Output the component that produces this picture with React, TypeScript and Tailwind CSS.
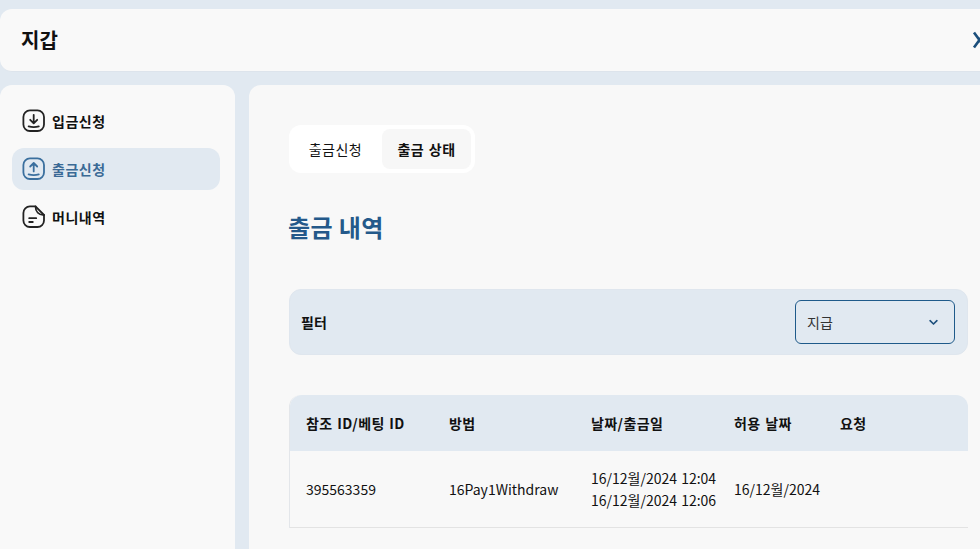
const font = "font-['Noto_Sans_CJK_KR','Noto_Sans',sans-serif]";

const DownloadIcon = () => (
  <svg width="24" height="24" viewBox="0 0 24 24" fill="none" stroke="currentColor" strokeWidth="1.8" strokeLinecap="round" strokeLinejoin="round">
    <rect x="1.4" y="1.4" width="20.6" height="20.6" rx="6.5" />
    <path d="M11.700 5.800v8.400M8.200 10.800l3.500 3.500 3.500-3.500" />
    <path d="M6.600 17.300c3.300 1 7 1 10.200 0" />
  </svg>
);

const UploadIcon = () => (
  <svg width="24" height="24" viewBox="0 0 24 24" fill="none" stroke="currentColor" strokeWidth="1.8" strokeLinecap="round" strokeLinejoin="round">
    <rect x="1.4" y="1.4" width="20.6" height="20.6" rx="6.5" />
    <path d="M11.700 14.400V6M8.200 9.500L11.700 6l3.500 3.500" />
    <path d="M6.600 17.300c3.300 1 7 1 10.200 0" />
  </svg>
);

const NoteIcon = () => (
  <svg width="24" height="24" viewBox="0 0 24 24" fill="none" stroke="currentColor" strokeWidth="1.8" strokeLinecap="round" strokeLinejoin="round">
    <path d="M13.500 1.400H7.900A6.500 6.500 0 0 0 1.400 7.900v7.600A6.500 6.500 0 0 0 7.900 22h7.600a6.500 6.500 0 0 0 6.500-6.500V10z" />
    <path d="M13.500 1.400c0 5 3.200 8.600 8.500 8.600" />
    <path d="M7.200 13.200h7M7.200 17h3.600" />
  </svg>
);

const menu = [
  { label: "입금신청", icon: <DownloadIcon /> },
  { label: "출금신청", icon: <UploadIcon />, active: true },
  { label: "머니내역", icon: <NoteIcon /> },
];

const headers = [
  { label: "참조 ID/베팅 ID", w: "w-[143px]" },
  { label: "방법", w: "w-[142px]" },
  { label: "날짜/출금일", w: "w-[143px]" },
  { label: "허용 날짜", w: "w-[106px]" },
  { label: "요청", w: "w-[100px]" },
];

export default function App() {
  return (
    <div className={`h-[549px] w-[980px] overflow-hidden bg-[#e1e9f1] pt-[9px] text-[#111] ${font}`}>
      <div className="w-[1040px]">
        <header className="flex h-[63px] items-center justify-between rounded-[12px] border-b border-[#dde4ec] bg-[#f9f9f9] pl-[21px] pr-[52px]">
          <h1 className="text-[20px] font-bold leading-none">지갑</h1>
          <svg width="16" height="18" viewBox="0 0 16 18" fill="none" stroke="#1c4f7c" strokeWidth="2.6">
            <path d="M2 1.500L13 16.500M13 1.500L2 16.500" />
          </svg>
        </header>

        <div className="mt-[13px] flex gap-[14px]">
          <aside className="h-[480px] w-[235px] shrink-0 rounded-[12px] bg-[#f9f9f9] pl-[12px] pr-[15px] pt-[15px]">
            <nav className="flex flex-col gap-[6px]">
              {menu.map((item) => (
                <div
                  key={item.label}
                  className={`flex h-[42px] items-center gap-[6px] rounded-[12px] pl-[10px] ${
                    item.active ? "bg-[#e1e9f1] text-[#3a6a96]" : "text-[#111]"
                  }`}
                >
                  <span className={item.active ? "text-[#3a6f9e]" : "text-[#222]"}>{item.icon}</span>
                  <span className="text-[14px] font-bold tracking-[0.5px]">{item.label}</span>
                </div>
              ))}
            </nav>
          </aside>

          <main className="h-[480px] w-[760px] shrink-0 rounded-[12px] bg-[#f8f8f8] pl-[40px] pt-[40px]">
            <div className="flex h-[48px] w-[186px] items-center rounded-[12px] bg-white p-[4px]">
              <div className="flex h-[40px] w-[89px] items-center justify-center pr-[4px] text-[14px] tracking-[0.5px]">출금신청</div>
              <div className="flex h-[40px] w-[89px] items-center justify-center rounded-[8px] bg-[#f7f7f7] text-[14px] font-bold tracking-[0.5px] [word-spacing:1px]">
                출금 상태
              </div>
            </div>

            <h2 className="-ml-px mt-[35px] text-[24px] font-bold leading-[38px] tracking-[0.4px] text-[#24598a]">출금 내역</h2>

            <div className="mt-[43px] flex h-[66px] w-[679px] items-center justify-between rounded-[12px] border border-[#dfe6ee] bg-[#e1e9f1] px-[11px]">
              <span className="text-[14px] font-bold">필터</span>
              <div className="mr-px flex h-[44px] w-[160px] items-center justify-between rounded-[6px] border border-[#1f5a8a] pl-[11px] pr-[16px] text-[14px] text-[#333]">
                <span>지급</span>
                <svg width="9" height="7" viewBox="0 0 10 7" fill="none" stroke="#1c4f7c" strokeWidth="1.8" strokeLinecap="round" strokeLinejoin="round">
                  <path d="M1.200 1.500L5 5.200l3.800-3.700" />
                </svg>
              </div>
            </div>

            <div className="mt-[40px] w-[679px] rounded-t-[12px] border-l border-[#e3e6ea]">
              <div className="flex h-[56px] items-center rounded-t-[12px] bg-[#e1e9f1] pl-[16px] text-[14px] font-bold tracking-[0.4px] [word-spacing:1px]">
                {headers.map((h) => (
                  <div key={h.label} className={h.w}>
                    {h.label}
                  </div>
                ))}
              </div>
              <div className="flex h-[77px] items-center border-b border-[#e3e3e3] pl-[16px] text-[14px]">
                <div className="w-[143px]">395563359</div>
                <div className="w-[142px]">16Pay1Withdraw</div>
                <div className="w-[143px] leading-[22px] [word-spacing:1px]">
                  <div>16/12월/2024 12:04</div>
                  <div>16/12월/2024 12:06</div>
                </div>
                <div className="w-[106px]">16/12월/2024</div>
              </div>
            </div>
          </main>
        </div>
      </div>
    </div>
  );
}
